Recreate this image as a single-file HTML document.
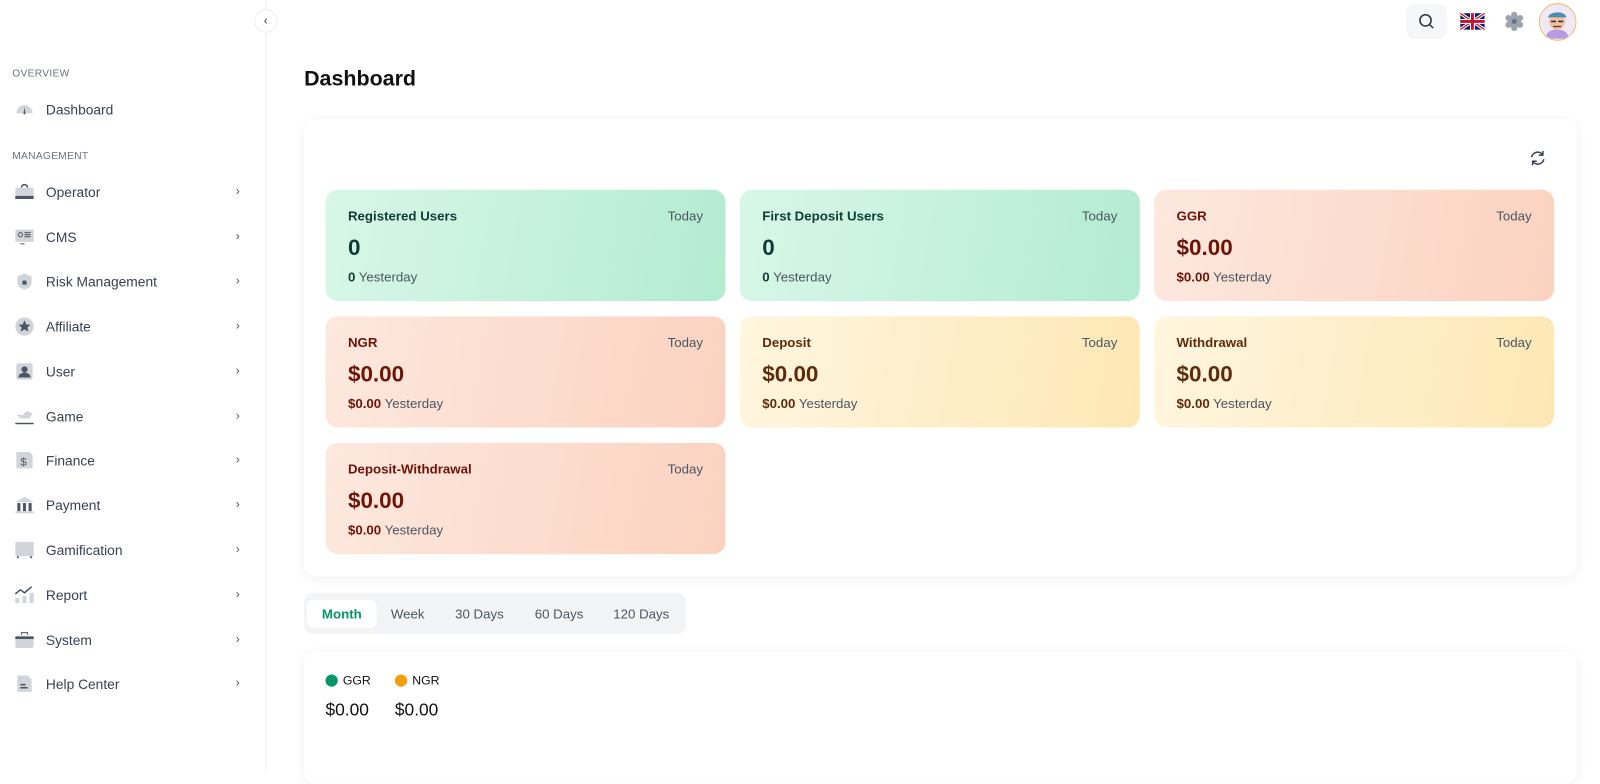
<!DOCTYPE html>
<html><head><meta charset="utf-8"><style>
*{box-sizing:border-box;margin:0;padding:0}
html,body{width:1600px;height:754px;overflow:hidden;background:#fff}
#w{position:absolute;left:0;top:0;width:1568px;height:739px;transform:scale(1.0204);transform-origin:0 0;font-family:"Liberation Sans",sans-serif;color:#111827}
.side{position:absolute;left:0;top:0;width:261px;height:754px;border-right:1px solid #eceef1;background:#fff}
.sec{position:absolute;left:12px;font-size:10px;color:#6b7280;letter-spacing:.3px}
.item{position:absolute;left:14px;width:225px;height:24px;display:flex;align-items:center;font-size:13.5px;color:#374151}
.item svg{width:20px;height:20px;margin-right:11px}
.item .ch{position:absolute;right:4px;top:4px;font-size:12px;color:#4b5563}
.coll{position:absolute;left:249px;top:9px;width:23px;height:23px;border-radius:50%;background:#fff;border:1px solid #eee;font-size:12px;text-align:center;line-height:20px;color:#374151}
h1{position:absolute;left:298px;top:66px;font-size:21px;font-weight:bold;color:#111}
.panel{position:absolute;left:298px;top:117px;width:1247px;height:448px;background:#fff;border-radius:12px;box-shadow:0 2px 12px rgba(0,0,0,.06)}
.card{position:absolute;width:392px;height:109px;border-radius:12px;padding:0 22px}
.card .t{position:absolute;left:22px;top:18px;font-size:13px;font-weight:bold}
.card .d{position:absolute;right:22px;top:18px;font-size:13px;color:#4b5563}
.card .v{position:absolute;left:22px;top:44px;font-size:22px;font-weight:bold}
.card .y{position:absolute;left:22px;top:78px;font-size:13px;color:#4b5563}
.card .y b{font-weight:bold}
.g{background:linear-gradient(100deg,#d8f7e7,#b3ecd0)}.g .t,.g .v,.g .y b{color:#0f3b36}
.o{background:linear-gradient(100deg,#fde8de,#fbd2c0)}.o .t,.o .v,.o .y b{color:#6e1308}
.yl{background:linear-gradient(100deg,#fff6df,#fde7b4)}.yl .t,.yl .v,.yl .y b{color:#5e2a0a}
.tabs{position:absolute;left:298px;top:581px;width:374px;height:40px;background:#f3f4f6;border-radius:8px;font-size:13px;color:#4b5563}
.tabs span{position:absolute;top:13px}
.tabs .a{left:3px;top:7px;width:68px;height:27px;background:#fff;border-radius:6px;color:#059669;font-weight:bold;text-align:center;line-height:27px}
.chart{position:absolute;left:298px;top:638px;width:1247px;height:130px;background:#fff;border-radius:12px;box-shadow:0 2px 12px rgba(0,0,0,.06)}
</style></head><body><div id="w">
<div class="side">
<div class="sec" style="top:67px">OVERVIEW</div>
<div class="item" style="top:95px"><svg viewBox="0 0 20 20"><path d="M2 14a8 8 0 0116 0z" fill="#d1d5db"/><path d="M10 8l-1 7h2z" fill="#4b5563"/></svg>Dashboard</div>
<div class="sec" style="top:148px">MANAGEMENT</div>
<div class="item" style="top:176px"><svg viewBox="0 0 20 20"><path d="M7 6a3 3 0 016 0" stroke="#4b5563" fill="none" stroke-width="1.5"/><rect x="1" y="6" width="18" height="10" rx="2" fill="#d1d5db"/><rect x="1" y="14" width="18" height="3" fill="#4b5563"/></svg>Operator<span class="ch">›</span></div>
<div class="item" style="top:220px"><svg viewBox="0 0 20 20"><rect x="1" y="3" width="18" height="12" fill="#d1d5db"/><circle cx="6" cy="8" r="2" fill="none" stroke="#4b5563"/><path d="M10 6h6M10 8h6M10 10h6M6 17h4" stroke="#4b5563"/></svg>CMS<span class="ch">›</span></div>
<div class="item" style="top:264px"><svg viewBox="0 0 20 20"><path d="M10 2l7 3v6c0 4-4 6-7 7-3-1-7-3-7-7V5z" fill="#d1d5db"/><rect x="8" y="9" width="4" height="4" fill="#4b5563"/></svg>Risk Management<span class="ch">›</span></div>
<div class="item" style="top:308px"><svg viewBox="0 0 20 20"><circle cx="10" cy="10" r="9" fill="#d1d5db"/><path d="M10 4l1.8 4 4 .3-3 2.7 1 4-3.8-2.2L6.2 15l1-4-3-2.7 4-.3z" fill="#4b5563"/></svg>Affiliate<span class="ch">›</span></div>
<div class="item" style="top:352px"><svg viewBox="0 0 20 20"><rect x="2" y="2" width="16" height="16" rx="2" fill="#d1d5db"/><circle cx="10" cy="8" r="3" fill="#4b5563"/><path d="M4 16a6 5 0 0112 0z" fill="#4b5563"/></svg>User<span class="ch">›</span></div>
<div class="item" style="top:396px"><svg viewBox="0 0 20 20"><path d="M2 8l6 1 4-4 6 2-3 5H6z" fill="#d1d5db"/><path d="M1 17h18" stroke="#4b5563" stroke-width="1.5"/></svg>Game<span class="ch">›</span></div>
<div class="item" style="top:439px"><svg viewBox="0 0 20 20"><path d="M2 2h13l3 3v13H2z" fill="#d1d5db"/><text x="6" y="15" font-size="11" fill="#4b5563" font-family="Liberation Sans">$</text></svg>Finance<span class="ch">›</span></div>
<div class="item" style="top:483px"><svg viewBox="0 0 20 20"><path d="M1 7l9-5 9 5z" fill="#d1d5db"/><rect x="3" y="8" width="3" height="8" fill="#4b5563"/><rect x="8.5" y="8" width="3" height="8" fill="#4b5563"/><rect x="14" y="8" width="3" height="8" fill="#4b5563"/><rect x="1" y="16" width="18" height="2" fill="#d1d5db"/></svg>Payment<span class="ch">›</span></div>
<div class="item" style="top:527px"><svg viewBox="0 0 20 20"><rect x="1" y="2" width="18" height="14" fill="#d1d5db"/><path d="M3 18l1-2M17 18l-1-2" stroke="#4b5563" stroke-width="1.5"/></svg>Gamification<span class="ch">›</span></div>
<div class="item" style="top:571px"><svg viewBox="0 0 20 20"><rect x="1" y="13" width="4" height="5" fill="#d1d5db"/><rect x="8" y="11" width="4" height="7" fill="#d1d5db"/><rect x="15" y="8" width="4" height="10" fill="#d1d5db"/><path d="M1 9l5-4 4 3 7-6" stroke="#4b5563" fill="none" stroke-width="1.5"/></svg>Report<span class="ch">›</span></div>
<div class="item" style="top:615px"><svg viewBox="0 0 20 20"><rect x="1" y="6" width="18" height="12" rx="2" fill="#d1d5db"/><path d="M1 8h18" stroke="#4b5563" stroke-width="2.5"/><path d="M7 5V3h6v2" stroke="#4b5563" fill="none"/></svg>System<span class="ch">›</span></div>
<div class="item" style="top:658px"><svg viewBox="0 0 20 20"><path d="M3 2h10l4 4v12H3z" fill="#d1d5db"/><path d="M6 11h5M6 14h7" stroke="#4b5563" stroke-width="1.5"/></svg>Help Center<span class="ch">›</span></div>
</div>
<div class="coll">‹</div>
<div style="position:absolute;left:1378px;top:4px;width:40px;height:34px;background:#f5f7f9;border-radius:8px"><svg width="40" height="34" viewBox="0 0 40 34"><circle cx="19" cy="16" r="5.5" fill="none" stroke="#333" stroke-width="1.5"/><path d="M23 20l3.5 3.5" stroke="#333" stroke-width="1.5"/></svg></div>
<svg style="position:absolute;left:1431px;top:12px" width="24" height="18" viewBox="0 0 60 40"><rect width="60" height="40" rx="5" fill="#012169"/><path d="M0 0l60 40M60 0L0 40" stroke="#fff" stroke-width="8"/><path d="M0 0l60 40M60 0L0 40" stroke="#c8102e" stroke-width="3"/><path d="M30 0v40M0 20h60" stroke="#fff" stroke-width="12"/><path d="M30 0v40M0 20h60" stroke="#c8102e" stroke-width="7"/></svg>
<svg style="position:absolute;left:1474px;top:11px" width="20" height="20" viewBox="0 0 20 20"><g fill="#9ca3af"><circle cx="10" cy="10" r="6.5"/><circle cx="10" cy="3.5" r="3"/><circle cx="10" cy="16.5" r="3"/><circle cx="4.3" cy="6.7" r="3"/><circle cx="15.7" cy="6.7" r="3"/><circle cx="4.3" cy="13.3" r="3"/><circle cx="15.7" cy="13.3" r="3"/></g><circle cx="10" cy="10" r="2.5" fill="#6b7280"/></svg>
<div style="position:absolute;left:1508px;top:3px;width:37px;height:37px;border-radius:50%;border:1.5px solid #e8c070;background:#f0e8f5;overflow:hidden"><svg width="34" height="34" viewBox="0 0 34 34"><path d="M6 34c0-7 5-9 11-9s11 2 11 9z" fill="#b89be0"/><circle cx="17" cy="17" r="8" fill="#f2c3a6"/><path d="M8 13c1-6 17-7 18 0z" fill="#4a8fb0"/><path d="M11 17h5M18 17h5" stroke="#333" stroke-width="1.5"/><path d="M13 22h8" stroke="#7a3b2a" stroke-width="1.5"/></svg></div>
<h1>Dashboard</h1>
<div class="panel">
<svg style="position:absolute;left:1200px;top:29px" width="18" height="18" viewBox="0 0 18 18" fill="none" stroke="#374151" stroke-width="1.5"><path d="M3 8a6 6 0 0111-2M15 10a6 6 0 01-11 2"/><path d="M14 2v4h-4M4 16v-4h4"/></svg>
</div>
<div class="card g" style="left:319px;top:186px"><div class="t">Registered Users</div><div class="d">Today</div><div class="v">0</div><div class="y"><b>0</b> Yesterday</div></div>
<div class="card g" style="left:725px;top:186px"><div class="t">First Deposit Users</div><div class="d">Today</div><div class="v">0</div><div class="y"><b>0</b> Yesterday</div></div>
<div class="card o" style="left:1131px;top:186px"><div class="t">GGR</div><div class="d">Today</div><div class="v">$0.00</div><div class="y"><b>$0.00</b> Yesterday</div></div>
<div class="card o" style="left:319px;top:310px"><div class="t">NGR</div><div class="d">Today</div><div class="v">$0.00</div><div class="y"><b>$0.00</b> Yesterday</div></div>
<div class="card yl" style="left:725px;top:310px"><div class="t">Deposit</div><div class="d">Today</div><div class="v">$0.00</div><div class="y"><b>$0.00</b> Yesterday</div></div>
<div class="card yl" style="left:1131px;top:310px"><div class="t">Withdrawal</div><div class="d">Today</div><div class="v">$0.00</div><div class="y"><b>$0.00</b> Yesterday</div></div>
<div class="card o" style="left:319px;top:434px"><div class="t">Deposit-Withdrawal</div><div class="d">Today</div><div class="v">$0.00</div><div class="y"><b>$0.00</b> Yesterday</div></div>
<div class="tabs"><span class="a">Month</span><span style="left:85px">Week</span><span style="left:148px">30 Days</span><span style="left:226px">60 Days</span><span style="left:303px">120 Days</span></div>
<div class="chart">
<div style="position:absolute;left:21px;top:23px;width:12px;height:12px;border-radius:50%;background:#059669"></div>
<div style="position:absolute;left:38px;top:22px;font-size:12px;color:#111">GGR</div>
<div style="position:absolute;left:89px;top:23px;width:12px;height:12px;border-radius:50%;background:#f59e0b"></div>
<div style="position:absolute;left:106px;top:22px;font-size:12px;color:#111">NGR</div>
<div style="position:absolute;left:21px;top:48px;font-size:17px;color:#111">$0.00</div>
<div style="position:absolute;left:89px;top:48px;font-size:17px;color:#111">$0.00</div>
</div>
</div></body></html>
